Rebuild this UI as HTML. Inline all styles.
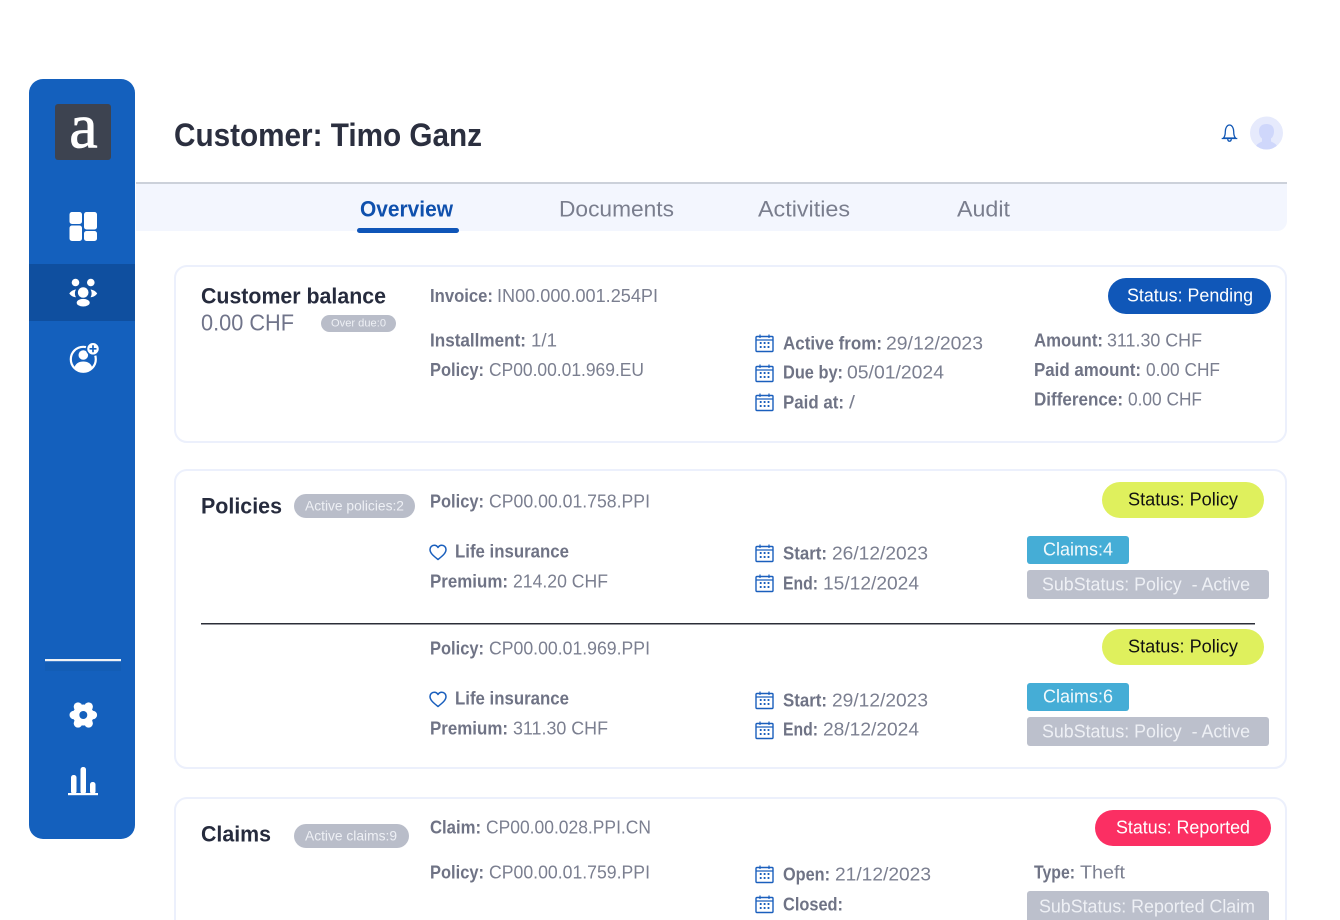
<!DOCTYPE html>
<html lang="en"><head><meta charset="utf-8"><title>Customer: Timo Ganz</title>
<style>
html,body{margin:0;padding:0;background:#fff}
svg{display:block;filter:blur(.35px)}
text{font-family:"Liberation Sans",sans-serif;font-size:18px;fill:#7b7f90;white-space:pre;transform:translateY(-.5px)}
.b{font-weight:700;fill:#6f7385}
.h{font-weight:700;font-size:22px;fill:#262b3d}
.t{font-size:22px;fill:#7a7e8e}
.w{fill:#fff}
.ws{fill:#eef0f5}
</style></head><body>
<svg xmlns="http://www.w3.org/2000/svg" width="1340" height="920" viewBox="0 0 1340 920">
<defs>
<g id="cal" fill="none" stroke="#1a5fbd">
<rect x="1" y="2.500" width="17" height="15" rx="1" stroke-width="1.400"/>
<path d="M1 6h17M5 0.500v3.500M14 0.500v3.500" stroke-width="1.200"/>
<path d="M4.800 9h1.800M8.700 9h1.800M12.600 9h1.800M4.800 13h1.800M8.700 13h1.800M12.600 13h1.800" stroke-width="1.900"/>
</g>
<path id="heart" d="M9 15.500C4 11.500 1 9 1 5.500 1 3 3 1.200 5.200 1.200 6.800 1.200 8.200 2 9 3.500 9.800 2 11.200 1.200 12.800 1.200 15 1.200 17 3 17 5.500 17 9 14 11.500 9 15.500Z" fill="none" stroke="#1a5fbd" stroke-width="1.500" stroke-linejoin="round"/>
<clipPath id="av"><circle cx="1266.500" cy="133" r="16.500"/></clipPath>
</defs>

<!-- sidebar -->
<rect x="29" y="79" width="106" height="760" rx="14" fill="#1460bd"/>
<rect x="29" y="264" width="106" height="57" fill="#0f4f9f"/>
<rect x="55" y="104" width="56" height="56" rx="3" fill="#3d4350"/>
<text x="83.500" y="148" text-anchor="middle" style="font-family:'Liberation Serif',serif;font-size:64px;fill:#fff;stroke:#fff;stroke-width:.8px">a</text>

<g fill="#fff">
<rect x="69.500" y="212" width="12.500" height="12" rx="2.500"/>
<rect x="69.500" y="225.500" width="12.500" height="15.500" rx="2.500"/>
<rect x="84" y="212" width="13" height="17.500" rx="2.500"/>
<rect x="84" y="231" width="13" height="10" rx="2.500"/>

<circle cx="75.500" cy="282.500" r="3.800"/><circle cx="90.800" cy="282.500" r="3.800"/>
<circle cx="83.200" cy="292.500" r="5.300"/>
<path d="M76 289.500c-2.900.3-5.200 1.800-6.700 4 1.500 2.200 3.800 3.600 6.700 3.800-.7-1.100-1.100-2.400-1.100-3.900s.4-2.800 1.100-3.900ZM90.500 289.500c2.900.3 5.200 1.800 6.700 4-1.500 2.200-3.800 3.600-6.700 3.800.7-1.100 1.100-2.400 1.100-3.900s-.4-2.800-1.100-3.900Z"/>
<ellipse cx="83.200" cy="302.700" rx="6.500" ry="3.800"/>
</g>

<g>
<circle cx="83.300" cy="359.300" r="12.500" fill="none" stroke="#fff" stroke-width="2.200"/>
<circle cx="83.300" cy="355" r="4.800" fill="#fff"/>
<path d="M74.300 368c1-4.500 4.500-6.500 9-6.500s8 2 9 6.500c-2.500 2.200-5.500 3.200-9 3.200s-6.500-1-9-3.200Z" fill="#fff"/>
<circle cx="93" cy="348.800" r="6.500" fill="#fff" stroke="#1460bd" stroke-width="1.500"/>
<path d="M93 345.300v7M89.500 348.800h7" stroke="#1460bd" stroke-width="1.700"/>
</g>

<rect x="45" y="659" width="76" height="2.200" fill="#f0f2f4"/>
<rect x="45" y="662" width="76" height="9" fill="#115aae" opacity=".5"/>

<g fill="#fff">
<circle cx="83.300" cy="715" r="10.500"/>
<circle cx="78" cy="706.700" r="4.300"/><circle cx="88.600" cy="706.700" r="4.300"/>
<circle cx="73.800" cy="715" r="4.300"/><circle cx="92.800" cy="715" r="4.300"/>
<circle cx="78" cy="723.300" r="4.300"/><circle cx="88.600" cy="723.300" r="4.300"/>
</g>
<circle cx="83.300" cy="715" r="4" fill="#1460bd"/>

<g fill="#fff">
<rect x="71" y="775" width="5.500" height="19" rx="2.500"/>
<rect x="80.500" y="767" width="5.500" height="27" rx="2.500"/>
<rect x="90" y="782" width="5.500" height="12" rx="2.500"/>
<rect x="68" y="793" width="30" height="2.200"/>
</g>

<!-- header -->
<text x="174" y="146.500" textLength="308" lengthAdjust="spacingAndGlyphs" style="font-size:32px;font-weight:700;fill:#2b2f3f">Customer: Timo Ganz</text>
<g fill="none" stroke="#1157b5" stroke-width="1.300" stroke-linejoin="round">
<path d="M1223.500 138c1.500-1.500 1.800-3 1.800-6.500 0-3.500 1.800-6.500 4.200-6.500s4.200 3 4.200 6.500c0 3.500.3 5 1.800 6.500Z"/>
<path d="M1221.700 138.500h15.600M1227.700 139c.3 3 3.300 3 3.600 0"/>
</g>
<circle cx="1266.500" cy="133" r="16.500" fill="#e6eafc"/>
<path clip-path="url(#av)" d="M1255 150c0-5 3.500-7 7-8.500v-3c-2-1.500-3-4-3-7.500 0-4.500 3-7 7.500-7s7.500 2.500 7.500 7c0 3.500-1 6-3 7.500v3c3.500 1.500 7 3.500 7 8.500Z" fill="#cfd7fb"/>

<!-- tabs -->
<path d="M136 184H1287V221a10 10 0 0 1-10 10H136Z" fill="#f3f6fe"/>
<rect x="136" y="182" width="1151" height="2" fill="#ccd1da"/>
<text x="360" y="217" textLength="93" lengthAdjust="spacingAndGlyphs" style="font-size:22px;font-weight:700;fill:#0f50ad">Overview</text>
<rect x="357" y="228" width="102" height="5" rx="2.500" fill="#0f55b8"/>
<text class="t" x="559" y="217" textLength="115" lengthAdjust="spacingAndGlyphs">Documents</text>
<text class="t" x="758" y="217" textLength="92" lengthAdjust="spacingAndGlyphs">Activities</text>
<text class="t" x="957" y="217" textLength="53" lengthAdjust="spacingAndGlyphs">Audit</text>

<!-- cards -->
<g fill="#fff" stroke="#ecf0fc" stroke-width="2">
<rect x="175" y="266" width="1111" height="176" rx="12"/>
<rect x="175" y="470" width="1111" height="298" rx="12"/>
<rect x="175" y="798" width="1111" height="140" rx="12"/>
</g>

<!-- balance -->
<text class="h" x="201" y="304" textLength="185" lengthAdjust="spacingAndGlyphs">Customer balance</text>
<text x="201" y="331" textLength="93" lengthAdjust="spacingAndGlyphs" style="font-size:23px;fill:#70748a">0.00 CHF</text>
<rect x="321" y="315" width="75" height="17" rx="8.500" fill="#b9bdc9"/>
<text class="ws" x="331" y="327" textLength="55" lengthAdjust="spacingAndGlyphs" style="font-size:11px">Over due:0</text>

<text class="b" x="430" y="302.500" textLength="63" lengthAdjust="spacingAndGlyphs">Invoice:</text><text x="497" y="302.500" textLength="161" lengthAdjust="spacingAndGlyphs">IN00.000.001.254PI</text>
<text class="b" x="430" y="347" textLength="96" lengthAdjust="spacingAndGlyphs">Installment:</text><text x="531" y="347" textLength="26" lengthAdjust="spacingAndGlyphs">1/1</text>
<text class="b" x="430" y="376.500" textLength="54" lengthAdjust="spacingAndGlyphs">Policy:</text><text x="489" y="376.500" textLength="155" lengthAdjust="spacingAndGlyphs">CP00.00.01.969.EU</text>

<use href="#cal" x="755" y="334"/><use href="#cal" x="755" y="364"/><use href="#cal" x="755" y="393"/>
<text class="b" x="783" y="350" textLength="99" lengthAdjust="spacingAndGlyphs">Active from:</text><text x="886" y="350" textLength="97" lengthAdjust="spacingAndGlyphs">29/12/2023</text>
<text class="b" x="783" y="379" textLength="60" lengthAdjust="spacingAndGlyphs">Due by:</text><text x="847" y="379" textLength="97" lengthAdjust="spacingAndGlyphs">05/01/2024</text>
<text class="b" x="783" y="409" textLength="61" lengthAdjust="spacingAndGlyphs">Paid at:</text><text x="849" y="409" textLength="6" lengthAdjust="spacingAndGlyphs">/</text>

<text class="b" x="1034" y="347" textLength="69" lengthAdjust="spacingAndGlyphs">Amount:</text><text x="1107" y="347" textLength="95" lengthAdjust="spacingAndGlyphs">311.30 CHF</text>
<text class="b" x="1034" y="376.500" textLength="107" lengthAdjust="spacingAndGlyphs">Paid amount:</text><text x="1146" y="376.500" textLength="74" lengthAdjust="spacingAndGlyphs">0.00 CHF</text>
<text class="b" x="1034" y="406" textLength="89" lengthAdjust="spacingAndGlyphs">Difference:</text><text x="1128" y="406" textLength="74" lengthAdjust="spacingAndGlyphs">0.00 CHF</text>

<rect x="1108" y="278" width="163" height="36" rx="18" fill="#1057b8"/>
<text class="w" x="1127" y="302" textLength="126" lengthAdjust="spacingAndGlyphs" style="font-size:18px">Status: Pending</text>

<!-- policies -->
<text class="h" x="201" y="514" textLength="81" lengthAdjust="spacingAndGlyphs">Policies</text>
<rect x="294" y="494" width="121" height="24" rx="12" fill="#b9bdc9"/>
<text class="ws" x="305" y="511" textLength="99" lengthAdjust="spacingAndGlyphs" style="font-size:14px">Active policies:2</text>

<text class="b" x="430" y="508" textLength="54" lengthAdjust="spacingAndGlyphs">Policy:</text><text x="489" y="508" textLength="161" lengthAdjust="spacingAndGlyphs">CP00.00.01.758.PPI</text>
<use href="#heart" x="429" y="544"/>
<text class="b" x="455" y="558" textLength="114" lengthAdjust="spacingAndGlyphs">Life insurance</text>
<text class="b" x="430" y="588" textLength="78" lengthAdjust="spacingAndGlyphs">Premium:</text><text x="513" y="588" textLength="95" lengthAdjust="spacingAndGlyphs">214.20 CHF</text>
<use href="#cal" x="755" y="544"/><use href="#cal" x="755" y="574"/>
<text class="b" x="783" y="560" textLength="44" lengthAdjust="spacingAndGlyphs">Start:</text><text x="832" y="560" textLength="96" lengthAdjust="spacingAndGlyphs">26/12/2023</text>
<text class="b" x="783" y="590" textLength="35" lengthAdjust="spacingAndGlyphs">End:</text><text x="823" y="590" textLength="96" lengthAdjust="spacingAndGlyphs">15/12/2024</text>

<rect x="1102" y="482" width="162" height="36" rx="18" fill="#dff05d"/>
<text x="1128" y="506" textLength="110" lengthAdjust="spacingAndGlyphs" style="font-size:18px;fill:#111">Status: Policy</text>
<rect x="1027" y="536" width="102" height="28" rx="3" fill="#45add6"/>
<text x="1043" y="556" textLength="70" lengthAdjust="spacingAndGlyphs" style="font-size:18px;fill:#f2f9fc">Claims:4</text>
<rect x="1027" y="570" width="242" height="29" rx="3" fill="#bcc0cc"/>
<text class="ws" x="1042" y="591" textLength="208" lengthAdjust="spacingAndGlyphs" style="font-size:18px">SubStatus: Policy  - Active</text>

<rect x="201" y="623" width="1054" height="1.500" fill="#2b2e38"/>

<text class="b" x="430" y="655" textLength="54" lengthAdjust="spacingAndGlyphs">Policy:</text><text x="489" y="655" textLength="161" lengthAdjust="spacingAndGlyphs">CP00.00.01.969.PPI</text>
<use href="#heart" x="429" y="691"/>
<text class="b" x="455" y="705" textLength="114" lengthAdjust="spacingAndGlyphs">Life insurance</text>
<text class="b" x="430" y="735" textLength="78" lengthAdjust="spacingAndGlyphs">Premium:</text><text x="513" y="735" textLength="95" lengthAdjust="spacingAndGlyphs">311.30 CHF</text>
<use href="#cal" x="755" y="691"/><use href="#cal" x="755" y="721"/>
<text class="b" x="783" y="707" textLength="44" lengthAdjust="spacingAndGlyphs">Start:</text><text x="832" y="707" textLength="96" lengthAdjust="spacingAndGlyphs">29/12/2023</text>
<text class="b" x="783" y="736" textLength="35" lengthAdjust="spacingAndGlyphs">End:</text><text x="823" y="736" textLength="96" lengthAdjust="spacingAndGlyphs">28/12/2024</text>

<rect x="1102" y="629" width="162" height="36" rx="18" fill="#dff05d"/>
<text x="1128" y="653" textLength="110" lengthAdjust="spacingAndGlyphs" style="font-size:18px;fill:#111">Status: Policy</text>
<rect x="1027" y="683" width="102" height="28" rx="3" fill="#45add6"/>
<text x="1043" y="703" textLength="70" lengthAdjust="spacingAndGlyphs" style="font-size:18px;fill:#f2f9fc">Claims:6</text>
<rect x="1027" y="717" width="242" height="29" rx="3" fill="#bcc0cc"/>
<text class="ws" x="1042" y="738" textLength="208" lengthAdjust="spacingAndGlyphs" style="font-size:18px">SubStatus: Policy  - Active</text>

<!-- claims -->
<text class="h" x="201" y="842" textLength="70" lengthAdjust="spacingAndGlyphs">Claims</text>
<rect x="294" y="824" width="115" height="24" rx="12" fill="#b9bdc9"/>
<text class="ws" x="305" y="841" textLength="92" lengthAdjust="spacingAndGlyphs" style="font-size:14px">Active claims:9</text>

<text class="b" x="430" y="834" textLength="51" lengthAdjust="spacingAndGlyphs">Claim:</text><text x="486" y="834" textLength="165" lengthAdjust="spacingAndGlyphs">CP00.00.028.PPI.CN</text>
<text class="b" x="430" y="879" textLength="54" lengthAdjust="spacingAndGlyphs">Policy:</text><text x="489" y="879" textLength="161" lengthAdjust="spacingAndGlyphs">CP00.00.01.759.PPI</text>
<use href="#cal" x="755" y="865"/><use href="#cal" x="755" y="895"/>
<text class="b" x="783" y="881" textLength="47" lengthAdjust="spacingAndGlyphs">Open:</text><text x="835" y="881" textLength="96" lengthAdjust="spacingAndGlyphs">21/12/2023</text>
<text class="b" x="783" y="911" textLength="60" lengthAdjust="spacingAndGlyphs">Closed:</text>
<text class="b" x="1034" y="879" textLength="41" lengthAdjust="spacingAndGlyphs">Type:</text><text x="1080" y="879" textLength="45" lengthAdjust="spacingAndGlyphs">Theft</text>

<rect x="1095" y="810" width="176" height="36" rx="18" fill="#fb2f63"/>
<text class="w" x="1116" y="834" textLength="134" lengthAdjust="spacingAndGlyphs" style="font-size:18px">Status: Reported</text>
<rect x="1027" y="891" width="242" height="35" rx="3" fill="#bcc0cc"/>
<text class="ws" x="1039" y="913" textLength="216" lengthAdjust="spacingAndGlyphs" style="font-size:18px">SubStatus: Reported Claim</text>
</svg>
</body></html>
